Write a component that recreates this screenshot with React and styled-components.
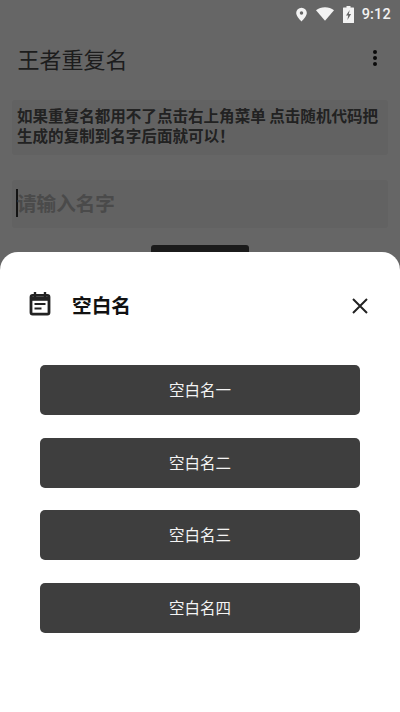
import React from 'react';
import styled, { createGlobalStyle } from 'styled-components';

const GlobalStyle = createGlobalStyle`
  html, body {
    margin: 0;
    padding: 0;
    background: #fff;
  }
  * {
    box-sizing: border-box;
  }
`;

const CJK = `"Noto Sans CJK SC", "Noto Sans", sans-serif`;

const Screen = styled.div`
  position: relative;
  width: 400px;
  height: 712px;
  overflow: hidden;
  background: #fff;
  font-family: ${CJK};
`;

const Page = styled.div`
  display: flex;
  flex-direction: column;
  padding-top: 28px;
`;

const AppBar = styled.div`
  display: flex;
  align-items: center;
  justify-content: space-between;
  height: 60px;
  padding: 0 22px 0 17.5px;
`;

const AppTitle = styled.div`
  font-size: 22px;
  line-height: 30px;
  color: #4a4a4a;
`;

const Content = styled.div`
  display: flex;
  flex-direction: column;
  padding: 12px 12px 0;
`;

const Notice = styled.div`
  background: #f4f4f4;
  border-radius: 3px;
  height: 55px;
  padding: 5px 5px;
  font-size: 15.55px;
  font-weight: 700;
  line-height: 20px;
  color: #555;
`;

const NameField = styled.div`
  display: flex;
  align-items: center;
  margin-top: 25px;
  height: 48px;
  background: #f4f4f4;
  border-radius: 3px;
  padding: 0 0 3px 4px;
`;

const Caret = styled.span`
  width: 2px;
  height: 28px;
  background: #333;
  margin-right: -1px;
`;

const Placeholder = styled.span`
  font-size: 19.6px;
  font-weight: 700;
  line-height: 27px;
  color: #b8b8b8;
`;

const ActionRow = styled.div`
  display: flex;
  justify-content: center;
  margin-top: 17px;
`;

const ActionButton = styled.div`
  width: 98px;
  height: 40px;
  background: #444;
  border-radius: 3px;
`;

const Scrim = styled.div`
  position: absolute;
  inset: 0;
  background: rgba(0, 0, 0, 0.6);
`;

const StatusBar = styled.div`
  position: absolute;
  top: 0;
  left: 0;
  right: 0;
  height: 28px;
  display: flex;
  align-items: center;
  justify-content: flex-end;
  padding-right: 9px;
  color: #f2f2f2;
`;

const StatusIcon = styled.svg`
  display: block;
  margin-right: ${(p) => p.$gap}px;
`;

const Clock = styled.span`
  font-family: Roboto, "Liberation Sans", sans-serif;
  font-size: 14.5px;
  font-weight: 500;
  letter-spacing: 0.2px;
`;

const Sheet = styled.div`
  position: absolute;
  left: 0;
  right: 0;
  bottom: 0;
  height: 460px;
  background: #fff;
  border-radius: 18px 18px 0 0;
  display: flex;
  flex-direction: column;
`;

const SheetHeader = styled.div`
  display: flex;
  align-items: center;
  height: 54px;
  margin-top: 25px;
  padding: 0 32px 0 29px;
`;

const SheetTitle = styled.div`
  flex: 1;
  margin-left: 21px;
  font-size: 19.7px;
  font-weight: 700;
  color: #111;
`;

const CloseIcon = styled.svg`
  display: block;
  margin-top: 4px;
`;

const NameList = styled.div`
  display: flex;
  flex-direction: column;
  gap: 22.5px;
  padding: 34px 40px 0;
`;

const NameButton = styled.button`
  height: 50px;
  border: 0;
  border-radius: 5px;
  background: #3e3e3e;
  color: #f4f4f4;
  font-family: ${CJK};
  font-size: 15.5px;
  padding: 0 0 2px;
`;

const names = ['空白名一', '空白名二', '空白名三', '空白名四'];

const App = () => {
  return (
    <Screen>
      <GlobalStyle />
      <Page>
        <AppBar>
          <AppTitle>王者重复名</AppTitle>
          <svg width="6" height="18" viewBox="0 0 6 18" fill="#1a1a1a">
            <circle cx="3" cy="3" r="2" />
            <circle cx="3" cy="9" r="2" />
            <circle cx="3" cy="15" r="2" />
          </svg>
        </AppBar>
        <Content>
          <Notice>如果重复名都用不了点击右上角菜单 点击随机代码把生成的复制到名字后面就可以！</Notice>
          <NameField>
            <Caret />
            <Placeholder>请输入名字</Placeholder>
          </NameField>
          <ActionRow>
            <ActionButton />
          </ActionRow>
        </Content>
      </Page>
      <Scrim />
      <StatusBar>
        <StatusIcon $gap={9} width="11" height="15" viewBox="0 0 12 15" fill="currentColor">
          <path fillRule="evenodd" d="M6 0a5.8 5.8 0 0 1 5.8 5.8C11.8 9.6 6 15 6 15S.2 9.6.2 5.8A5.8 5.8 0 0 1 6 0zm0 3.9a1.9 1.9 0 1 0 0 3.8 1.9 1.9 0 0 0 0-3.8z" />
        </StatusIcon>
        <StatusIcon $gap={9} width="18" height="14" viewBox="0 0 20 15" fill="currentColor">
          <path d="M10 15 0 3.2C2.7 1.2 6.2 0 10 0s7.3 1.2 10 3.2z" />
        </StatusIcon>
        <StatusIcon $gap={8} width="11" height="17" viewBox="0 0 11 17" fill="currentColor">
          <path fillRule="evenodd" d="M3.5 0h4v1.5h3a.5.5 0 0 1 .5.5v14.5a.5.5 0 0 1-.5.5H.5a.5.5 0 0 1-.5-.5V2a.5.5 0 0 1 .5-.5h3zM6.7 4 3 9.6h2.2L4.4 14l3.7-6H5.8z" />
        </StatusIcon>
        <Clock>9:12</Clock>
      </StatusBar>
      <Sheet>
        <SheetHeader>
          <svg width="22" height="24" viewBox="0 0 22 24" fill="none">
            <path d="M6 0v5M16 0v5" stroke="#222" strokeWidth="2.4" />
            <rect x="2" y="3.4" width="18" height="18.8" rx="1.6" stroke="#222" strokeWidth="2.8" />
            <path d="M2 6.8h18" stroke="#222" strokeWidth="4" />
            <path d="M5.5 12h11M5.5 16.5h7" stroke="#222" strokeWidth="2" />
          </svg>
          <SheetTitle>空白名</SheetTitle>
          <CloseIcon width="16" height="16" viewBox="0 0 16 16" fill="none" stroke="#222" strokeWidth="2">
            <path d="M1 1l14 14M15 1 1 15" />
          </CloseIcon>
        </SheetHeader>
        <NameList>
          {names.map((name) => (
            <NameButton key={name}>{name}</NameButton>
          ))}
        </NameList>
      </Sheet>
    </Screen>
  );
};

export default App;
